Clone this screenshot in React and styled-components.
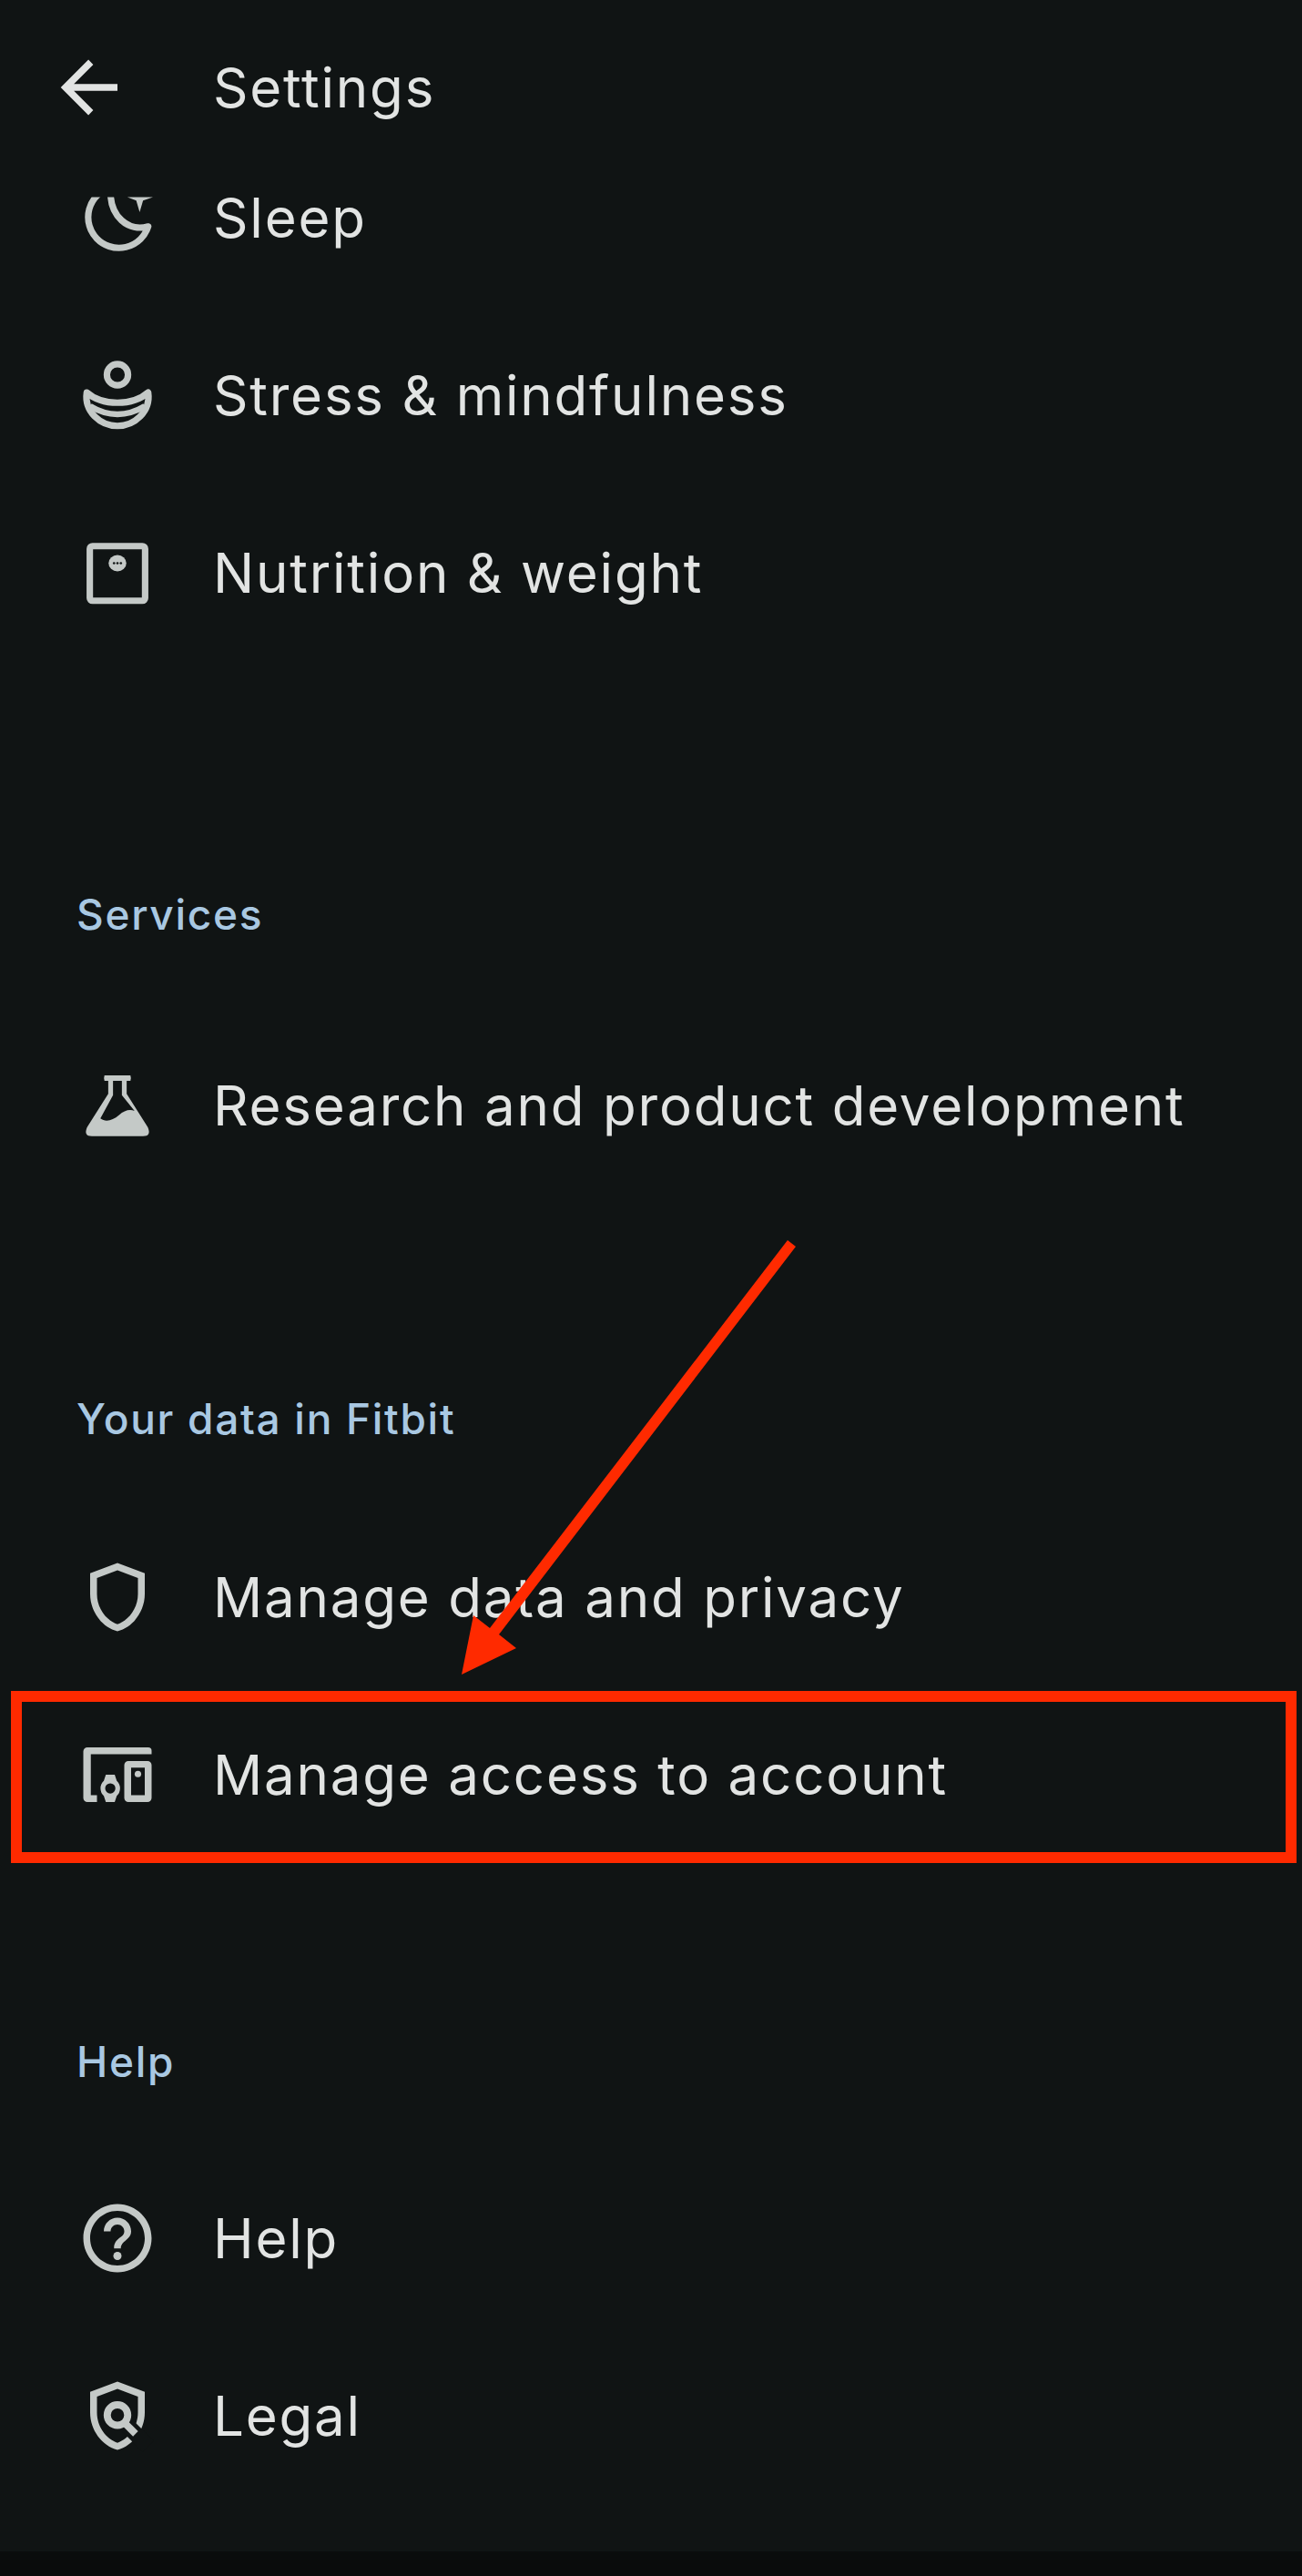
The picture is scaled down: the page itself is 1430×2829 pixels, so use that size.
import React from "react";
import styled, { createGlobalStyle } from "styled-components";

const ICON = "#c4c9c7";
const BG = "#101414";

const GlobalStyle = createGlobalStyle`
  html, body {
    margin: 0;
    padding: 0;
    background: ${BG};
  }
`;

function Icon({ children, $size = 90 }) {
  return (
    <IconBox viewBox="0 0 24 24" width={$size} height={$size} aria-hidden="true">
      {children}
    </IconBox>
  );
}

const BackIcon = () => (
  <BackSvg viewBox="0 0 24 24" aria-hidden="true">
    <path d="M20 12H5M12.2 4.6 4.8 12l7.4 7.4" fill="none" stroke="#e2e4e3" strokeWidth="2" />
  </BackSvg>
);

const SleepIcon = () => (
  <Icon>
    <path
      d="M10 3.2A9 9 0 1 0 21 14.6C15.5 16.2 9.4 12 10 3.2Z"
      fill="none"
      stroke={ICON}
      strokeWidth="1.9"
      strokeLinejoin="round"
    />
    <path d="M18.5 1.6 19.5 5 22.4 6 19.5 7 18.5 10.4 17.5 7 14.9 6 17.5 5Z" fill={ICON} />
  </Icon>
);

const StressIcon = () => (
  <Icon>
    <circle cx="12" cy="6" r="3.1" fill="none" stroke={ICON} strokeWidth="1.9" />
    <path
      d="M3 11.2C5.5 13.4 8.5 14.2 12 14.2S18.5 13.4 21 11.2C21.8 16.8 17 21 12 21S2.2 16.8 3 11.2Z"
      fill="none"
      stroke={ICON}
      strokeWidth="1.9"
      strokeLinejoin="round"
    />
    <path d="M4 15.2C7 17 9.5 17.6 12 17.6S17 17 20 15.2" fill="none" stroke={ICON} strokeWidth="1.7" />
  </Icon>
);

const ScaleIcon = () => (
  <Icon>
    <rect x="3.9" y="4.2" width="16.2" height="16" rx="0.8" fill="none" stroke={ICON} strokeWidth="1.9" />
    <ellipse cx="12" cy="9.2" rx="2.6" ry="2.4" fill={ICON} />
    <circle cx="11" cy="9.2" r="0.35" fill={BG} />
    <circle cx="12" cy="9.2" r="0.35" fill={BG} />
    <circle cx="13" cy="9.2" r="0.35" fill={BG} />
  </Icon>
);

const FlaskIcon = () => (
  <Icon>
    <path
      fillRule="evenodd"
      fill={ICON}
      d="M8.2 3.2H15.8Q16.1 4 15.8 4.8H14.7V8.6L20.9 18.4Q22 21 19.5 21H4.5Q2 21 3.1 18.4L9.3 8.6V4.8H8.2Q7.9 4 8.2 3.2ZM10.7 4.8H13.3V9L17 13.6C15.5 13 14 13.5 12.5 14.8 10.5 16.5 8.5 17 7 15.8L10.7 9Z"
    />
  </Icon>
);

const ShieldIcon = () => (
  <Icon>
    <path
      fill={ICON}
      d="M12 2 4 5v6.09c0 5.05 3.41 9.76 8 10.91 4.59-1.15 8-5.86 8-10.91V5l-8-3zm6 9.09c0 4-2.55 7.7-6 8.83-3.45-1.13-6-4.82-6-8.83v-4.7l6-2.25 6 2.25v4.7z"
    />
  </Icon>
);

const DevicesIcon = () => (
  <Icon>
    <path
      fill={ICON}
      d="M3.2 4H21a1 1 0 0 1 1 1V6H4.2V18H6V20H3.2A1.2 1.2 0 0 1 2 18.8V5.2A1.2 1.2 0 0 1 3.2 4Z"
    />
    <path
      fill={ICON}
      fillRule="evenodd"
      d="M15.2 8H20.8A1.2 1.2 0 0 1 22 9.2V18.8A1.2 1.2 0 0 1 20.8 20H15.2A1.2 1.2 0 0 1 14 18.8V9.2A1.2 1.2 0 0 1 15.2 8ZM16 9.9V18H20V9.9Z"
    />
    <circle cx="18" cy="11.8" r="0.95" fill={ICON} />
    <path
      fill={ICON}
      fillRule="evenodd"
      d="M8.6 12H11.2L11.8 13.8A3 3 0 0 1 11.8 18.2L11.2 20H8.6L8 18.2A3 3 0 0 1 8 13.8ZM9.9 14.5A1.5 1.5 0 1 0 9.9 17.5 1.5 1.5 0 1 0 9.9 14.5Z"
    />
  </Icon>
);

const HelpIcon = () => (
  <Icon>
    <path
      fill={ICON}
      d="M12 2C6.48 2 2 6.48 2 12s4.48 10 10 10 10-4.48 10-10S17.52 2 12 2zm0 18c-4.41 0-8-3.59-8-8s3.59-8 8-8 8 3.59 8 8-3.59 8-8 8zm0-14c-2.21 0-4 1.79-4 4h2c0-1.1.9-2 2-2s2 .9 2 2c0 2-3 1.75-3 5h2c0-2.25 3-2.5 3-5 0-2.21-1.79-4-4-4z"
    />
    <circle cx="12" cy="17.2" r="1.2" fill={ICON} />
  </Icon>
);

const LegalIcon = () => (
  <Icon>
    <path
      fill={ICON}
      d="M12 2 4 5v6.09c0 5.05 3.41 9.76 8 10.91 4.59-1.15 8-5.86 8-10.91V5l-8-3zm6 9.09c0 4-2.55 7.7-6 8.83-3.45-1.13-6-4.82-6-8.83v-4.7l6-2.25 6 2.25v4.7z"
    />
    <path d="M15 15 21 21" stroke={BG} strokeWidth="4.6" />
    <circle cx="12" cy="11.8" r="3" fill="none" stroke={ICON} strokeWidth="2.1" />
    <path d="M14 14 17.3 17.3" stroke={ICON} strokeWidth="2.1" />
  </Icon>
);

function MenuRow({ icon, label, clipIcon }) {
  return (
    <Row>
      <RowIcon $clipTop={clipIcon}>{icon}</RowIcon>
      <RowLabel>{label}</RowLabel>
    </Row>
  );
}

function App() {
  return (
    <>
      <GlobalStyle />
      <Page>
        <Header>
          <BackIcon />
          <Title>Settings</Title>
        </Header>

        <ScrollArea>
          {/* list is scrolled, the moon icon slides under the header */}
          <Group $top={-75} $gap={0}>
            <MenuRow icon={<SleepIcon />} label="Sleep" clipIcon={23} />
            <MenuRow icon={<StressIcon />} label="Stress & mindfulness" />
            <MenuRow icon={<ScaleIcon />} label="Nutrition & weight" />
          </Group>

          <Group $top={248} $gap={82}>
            <GroupTitle>Services</GroupTitle>
            <MenuRow icon={<FlaskIcon />} label="Research and product development" />
          </Group>

          <Group $top={217} $gap={68}>
            <GroupTitle>Your data in Fitbit</GroupTitle>
            <MenuRow icon={<ShieldIcon />} label="Manage data and privacy" />
            <MenuRow icon={<DevicesIcon />} label="Manage access to account" />
          </Group>

          <Group $top={188} $gap={66}>
            <GroupTitle>Help</GroupTitle>
            <MenuRow icon={<HelpIcon />} label="Help" />
            <MenuRow icon={<LegalIcon />} label="Legal" />
          </Group>
        </ScrollArea>

        <NavBar />

        <Highlight />
        <ArrowOverlay viewBox="0 0 1430 2829" aria-hidden="true">
          <path
            fill="#ff2a00"
            d="M865 1362 874 1369 548 1795 567 1810 507 1839 520 1774 538 1788Z"
          />
        </ArrowOverlay>
      </Page>
    </>
  );
}

const Page = styled.div`
  position: relative;
  width: 1430px;
  height: 2829px;
  display: flex;
  flex-direction: column;
  overflow: hidden;
  background: ${BG};
  font-family: "Inter", "Noto Sans", sans-serif;
`;

const Header = styled.header`
  flex: 0 0 216px;
  box-sizing: border-box;
  padding: 51px 0 0 54px;
  display: flex;
  align-items: flex-start;
  gap: 90px;
`;

const BackSvg = styled.svg`
  width: 90px;
  height: 90px;
  flex: none;
`;

const Title = styled.h1`
  margin: 0;
  font-size: 60px;
  line-height: 90px;
  font-weight: 400;
  letter-spacing: 1.8px;
  color: #e2e4e3;
`;

const ScrollArea = styled.main`
  flex: 1;
  min-height: 0;
`;

const Group = styled.section`
  display: flex;
  flex-direction: column;
  margin-top: ${(props) => props.$top}px;

  & > h2 {
    margin-bottom: ${(props) => props.$gap}px;
  }
`;

const GroupTitle = styled.h2`
  margin: 0;
  padding-left: 84px;
  font-size: 46px;
  line-height: 60px;
  font-weight: 500;
  letter-spacing: 1.7px;
  color: #a9c8e2;
`;

const Row = styled.div`
  height: 195px;
  display: flex;
  align-items: center;
  gap: 60px;
  padding-left: 84px;
`;

const RowIcon = styled.span`
  display: flex;
  width: 90px;
  height: 90px;
  flex: none;
  clip-path: inset(${(props) => props.$clipTop || 0}px 0 0 0);
`;

const IconBox = styled.svg`
  display: block;
`;

const RowLabel = styled.span`
  font-size: 60px;
  line-height: 90px;
  letter-spacing: 1.8px;
  color: #e2e4e3;
  white-space: nowrap;
`;

const NavBar = styled.div`
  flex: 0 0 27px;
  background: #0a0c0c;
`;

const Highlight = styled.div`
  position: absolute;
  left: 12px;
  top: 1857px;
  width: 1412px;
  height: 189px;
  box-sizing: border-box;
  border: 12px solid #ff2a00;
`;

const ArrowOverlay = styled.svg`
  position: absolute;
  inset: 0;
  width: 1430px;
  height: 2829px;
  pointer-events: none;
`;

export default App;
